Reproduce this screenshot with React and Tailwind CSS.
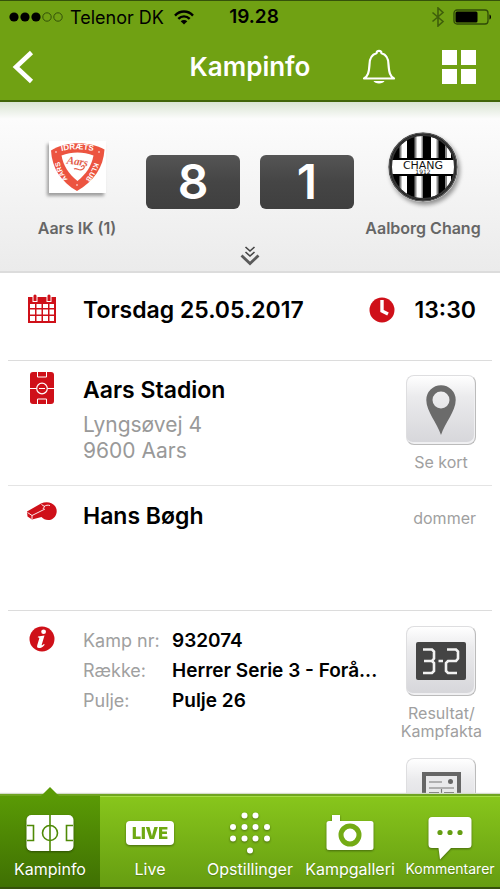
import React, { useState } from 'react';

function StatusBar() {
    return (
        <div className="grid grid-cols-[1fr_auto_1fr] items-center h-8 px-2 text-black">
            <div className="flex items-center whitespace-nowrap">
                <svg className="shrink-0" width="56" height="12" viewBox="0 0 56 12" aria-hidden="true">
                    <circle cx="6" cy="6" r="4.6" />
                    <circle cx="17" cy="6" r="4.6" />
                    <circle cx="28" cy="6" r="4.6" />
                    <circle cx="39" cy="6" r="4.2" fill="none" stroke="#33500a" />
                    <circle cx="50" cy="6" r="4.2" fill="none" stroke="#33500a" />
                </svg>
                <span className="ml-1.5 text-[18px]">Telenor DK</span>
                <svg className="ml-2.5 shrink-0" width="20" height="15" viewBox="0 0 20 15" fill="none" stroke="#000" strokeWidth="2.4" aria-hidden="true">
                    <path d="M1 5.6C6 .2 14 .2 19 5.6" />
                    <path d="M4.300 8.900c3.300-3.400 8.100-3.400 11.400 0" />
                    <path d="M10 14.500 6.700 11.300c1.900-1.700 4.700-1.700 6.600 0z" fill="#000" stroke="none" />
                </svg>
            </div>
            <span className="pl-2 text-[19px] font-semibold">19.28</span>
            <div className="flex items-center justify-end gap-2">
                <svg width="14" height="20" viewBox="0 0 14 20" fill="none" stroke="#3f5f0b" strokeWidth="1.600" aria-hidden="true">
                    <path d="M1.500 5.500 12 14.500 7 19V1l5 4.500-10.500 9" />
                </svg>
                <svg width="39" height="16" viewBox="0 0 39 16" aria-hidden="true">
                    <rect x="1" y="1" width="34" height="14" rx="3" fill="none" stroke="#2f4a08" strokeWidth="1.300" />
                    <rect x="2.500" y="2.500" width="22" height="11" rx="1.500" />
                    <path d="M36.500 5.500c2 .6 2 4.400 0 5z" />
                </svg>
            </div>
        </div>
    );
}

function Header() {
    return (
        <header className="shrink-0 bg-[#70a113] border-t border-t-[#35520a] border-b-2 border-b-[#416509]">
            <StatusBar />
            <div className="grid grid-cols-[1fr_auto_1fr] items-center h-[67px] px-3">
                <button aria-label="Tilbage" className="w-6">
                    <svg width="22" height="34" viewBox="0 0 22 34" fill="none" stroke="#fff" strokeWidth="4.600" aria-hidden="true">
                        <path d="M19.500 2.500 4 17l15.500 14.500" />
                    </svg>
                </button>
                <h1 className="text-[26px] font-semibold text-white">Kampinfo</h1>
                <div className="flex items-center justify-end gap-[46px] pr-3">
                    <button aria-label="Notifikationer">
                        <svg width="34" height="36" viewBox="0 0 34 36" fill="none" stroke="#fff" strokeWidth="2.200" aria-hidden="true">
                            <path d="M2 29.500c4-2.500 5-6 5.500-14C7.500 9 10 5.500 14.500 4.200c0-3.200 5-3.200 5 0C24 5.500 26.500 9 26.500 15.500c.5 8 1.500 11.500 5.500 14z" strokeLinejoin="round" />
                            <path d="M11.500 32h11c-1 3.300-10 3.300-11 0z" fill="#fff" stroke="none" />
                        </svg>
                    </button>
                    <button aria-label="Menu" className="grid grid-cols-2 gap-1">
                        <span className="w-[15px] h-[15px] bg-white" />
                        <span className="w-[15px] h-[15px] bg-white" />
                        <span className="w-[15px] h-[15px] bg-white" />
                        <span className="w-[15px] h-[15px] bg-white" />
                    </button>
                </div>
            </div>
        </header>
    );
}

function AarsLogo() {
    return (
        <svg width="57" height="52" viewBox="0 0 57 52" className="bg-white shadow-[-2px_3px_3px_rgba(0,0,0,0.35)]" role="img" aria-label="Aars IK">
            <path d="M2 9.500C17 0 40 0 55.500 8.500c-1 18-11 32-27.500 41.500C12 41 3 27 2 9.500z" fill="#ec5440" />
            <path d="M12.500 14.500c10-4 22-4 32 0C42.500 25 37.500 32.500 28.500 40 19.500 33 14.500 25 12.500 14.500z" fill="#fff" />
            <path id="aarsTop" d="M8 11Q28.500 5.500 49 11" fill="none" />
            <path id="aarsLeft" d="M24 44Q12 34 9 13" fill="none" />
            <path id="aarsRight" d="M47 14Q44 33 31 44" fill="none" />
            <g fill="#fff" fontFamily="Liberation Sans" fontWeight="bold" fontSize="7">
                <text fontSize="8"><textPath href="#aarsTop" startOffset="50%" textAnchor="middle">IDRÆTS</textPath></text>
                <text><textPath href="#aarsLeft" startOffset="50%" textAnchor="middle">AARS</textPath></text>
                <text><textPath href="#aarsRight" startOffset="50%" textAnchor="middle">KLUB</textPath></text>
            </g>
            <g fill="#fff">
                <circle cx="7" cy="11" r=".8" />
                <circle cx="50" cy="11" r=".8" />
                <circle cx="28" cy="44" r=".8" />
            </g>
            <text x="28" y="24" transform="rotate(8 28 24)" textAnchor="middle" fontFamily="Liberation Serif" fontStyle="italic" fontWeight="bold" fontSize="11" fill="#e2604c">Aars</text>
            <path d="M25 28c3-2 5 3 9 0 3-2 0-5-2-2" fill="none" stroke="#e2604c" strokeWidth="1.200" />
        </svg>
    );
}

function ChangLogo() {
    return (
        <svg width="70" height="70" viewBox="0 0 70 70" className="rounded-full shadow-[2px_3px_4px_rgba(0,0,0,0.4)]" role="img" aria-label="Aalborg Chang">
            <defs>
                <clipPath id="changClip"><circle cx="35" cy="35" r="31.500" /></clipPath>
            </defs>
            <circle cx="35" cy="35" r="34" fill="#111" stroke="#555" strokeWidth="1.500" />
            <g clipPath="url(#changClip)">
                <rect width="70" height="70" fill="#000" />
                <path d="M13 0h6v70h-6zM28 0h6v70h-6zM43 0h6v70h-6zM59 0h4v70h-4z" fill="#fff" />
                <path d="M11.500 0h2v70h-2zM26.500 0h2v70h-2zM33.500 0h1.500v70h-1.500zM48.500 0h2v70h-2zM57 0h2v70h-2z" fill="#888" />
                <rect y="26" width="70" height="18" fill="#000" />
            </g>
            <rect x="3.500" y="28" width="63" height="14" fill="#fff" />
            <text fill="#111" textAnchor="middle" fontFamily="DejaVu Sans">
                <tspan x="35" y="36.500" fontSize="11">CHANG</tspan>
                <tspan x="35" y="41.500" fontSize="6">1912</tspan>
            </text>
            <circle cx="35" cy="35" r="32" fill="none" stroke="#333" strokeWidth="2" />
        </svg>
    );
}

function Team({ name, children }) {
    return (
        <div className="flex flex-1 flex-col items-center">
            <div className="flex h-[74px] items-center">{children}</div>
            <span className="mt-3 text-[16px] leading-6 font-semibold text-[#666] whitespace-nowrap">{name}</span>
        </div>
    );
}

function ScoreBox({ value }) {
    return (
        <div className="flex h-[54px] w-[94px] items-center justify-center rounded-md bg-linear-to-b from-[#555] from-0% via-[#454545] via-50% to-[#3f3f3f] text-[48px] font-semibold text-white">
            {value}
        </div>
    );
}

function ScorePanel() {
    return (
        <section className="border-b-2 border-[#dcdcdc] bg-linear-to-b from-[#d9e4d2] from-0% via-[#fcfcfc] via-10% to-[#ebebeb] px-2 pt-7 pb-[5px]">
            <div className="flex items-start justify-between">
                <Team name="Aars IK (1)"><AarsLogo /></Team>
                <div className="flex gap-5 pt-[25px]">
                    <ScoreBox value="8" />
                    <ScoreBox value="1" />
                </div>
                <Team name="Aalborg Chang"><ChangLogo /></Team>
            </div>
            <button aria-label="Vis mere" className="mx-auto mt-1.5 block">
                <svg width="20" height="20" viewBox="0 0 20 20" fill="none" stroke="#444" aria-hidden="true">
                    <path d="m5.500 1 4.500 4 4.500-4M5.500 6l4.500 4 4.500-4" strokeWidth="1.600" />
                    <path d="m1.500 9.500 8.500 8 8.500-8" stroke="#5a5a5a" strokeWidth="2.800" />
                </svg>
            </button>
        </section>
    );
}

function Row({ icon, className, children }) {
    return (
        <section className={'mx-2 flex gap-2 ' + className}>
            <div className="flex w-[67px] shrink-0 justify-center">{icon}</div>
            {children}
        </section>
    );
}

function TileButton({ label, children }) {
    return (
        <button className="flex flex-col items-center gap-2 text-[16px] leading-[18px] text-[#a0a0a0]">
            <span className="flex h-[70px] w-[70px] items-center justify-center rounded-lg border border-[#dedee0] border-r-[#bbb] border-b-[#bbb] bg-linear-to-b from-white via-[#ebebed] via-30% to-[#d6d6da] shadow-[inset_-1px_-2px_0_#f0f0f2]">
                {children}
            </span>
            <span className="whitespace-pre-line">{label}</span>
        </button>
    );
}

function CalendarIcon() {
    return (
        <svg width="30" height="30" viewBox="0 0 30 30" aria-hidden="true">
            <path d="M1 3h28v26H1z" fill="#cf1019" />
            <path d="M5.500 0h5v8h-5zM19.500 0h5v8h-5z" fill="#fff" />
            <path d="M6.500 1.500q1.500-2 3 0V7h-3zM20.500 1.500q1.500-2 3 0V7h-3z" fill="#cf1019" />
            <path d="M3 10h5v4H3zM9.500 10h5v4h-5zM16 10h5v4h-5zM22.500 10h4.500v4h-4.500zM3 15.500h5v5H3zM9.500 15.500h5v5h-5zM16 15.500h5v5h-5zM22.500 15.500h4.500v5h-4.500zM3 22h5v5H3zM9.500 22h5v5h-5zM16 22h5v5h-5zM22.500 22h4.500v5h-4.500z" fill="#fff" />
        </svg>
    );
}

function ClockIcon() {
    return (
        <svg width="26" height="26" viewBox="0 0 26 26" aria-hidden="true">
            <circle cx="13" cy="13" r="12.500" fill="#cf1019" />
            <path d="M13 3v11l6 3" fill="none" stroke="#fff" strokeWidth="3.400" />
        </svg>
    );
}

function PitchIcon() {
    return (
        <svg width="24" height="32" viewBox="0 0 24 32" aria-hidden="true">
            <rect width="24" height="32" rx="3" fill="#cf1019" />
            <path d="M0 16.500h6.500M17.500 16.500H24M7.500 0v5h9V0M7.500 32v-5h9v5M9 16.500h6" fill="none" stroke="#fff" strokeWidth="1" />
            <circle cx="12" cy="16.500" r="5.300" fill="none" stroke="#fff" strokeWidth="1.200" />
        </svg>
    );
}

function WhistleIcon() {
    return (
        <svg width="32" height="20" viewBox="0 0 32 20" aria-hidden="true">
            <path d="M1 9.500 15 1.500c5-2.500 11-1.500 14 2.500 4 5.500.5 13-5.500 14-3.500.5-6-1-8-3L6 17.500 1.500 14.500z" fill="#cf1019" />
            <path d="M1.500 10.500 6 13.500l13-6.500M6 13.500v3.500M15.500 2.500l3 2-1.500 2.500M18 4.500c2-1.500 4-1.500 6-1" fill="none" stroke="#fff" strokeWidth=".9" />
        </svg>
    );
}

function InfoIcon() {
    return (
        <svg width="26" height="26" viewBox="0 0 26 26" aria-hidden="true">
            <circle cx="13" cy="13" r="12.500" fill="#cf1019" />
            <ellipse cx="14.600" cy="5.800" rx="2.400" ry="2.200" fill="#fff" />
            <path d="M9 10.500c2-.2 4.500-.8 6.500-1l-2.800 9.300c-.2.900.5.700 2.300-.8l.7.700c-2.300 2.700-4 3.300-5.700 3.300-2 0-2.200-1.300-1.700-3l1.900-6.200c.3-1-.1-1.300-1.400-1.300z" fill="#fff" />
        </svg>
    );
}

function PinIcon() {
    return (
        <svg width="30" height="50" viewBox="0 0 30 50" aria-hidden="true">
            <path fillRule="evenodd" d="M15 50C11 38 .3 26 .3 15a14.700 14.700 0 0 1 29.400 0C29.700 26 19 38 15 50zM15 6.500a8.500 8.500 0 1 0 0 17 8.500 8.500 0 0 0 0-17z" fill="#6b6b6b" />
        </svg>
    );
}

function ScoreboardIcon() {
    return (
        <svg width="50" height="38" viewBox="0 0 50 38" aria-hidden="true">
            <rect width="50" height="38" rx="2" fill="#444" />
            <path d="M7 7.500h9l2 2v7l-2 2.500H8M16 19l2 2v8l-2 2H7M31 7.500h9l2 2v7l-2 2.500h-8l-2 2V29l2 2h9M22.500 19h4.500" fill="none" stroke="#f2f2f2" strokeWidth="2.600" />
        </svg>
    );
}

function ReportIcon() {
    return (
        <svg width="39" height="42" viewBox="0 0 39 42" aria-hidden="true">
            <rect x="2" y="2" width="35" height="38" fill="#e9e9eb" stroke="#666" strokeWidth="4" />
            <path d="M7 10h13M7 16h25M19.500 17v19" stroke="#777" strokeWidth="1.200" />
            <path d="M7 21h10M22 21h10M7 25h10M22 25h10M7 29h10M22 29h10" stroke="#777" strokeWidth="2" />
            <circle cx="28.500" cy="9.500" r="2.500" fill="#666" />
        </svg>
    );
}

const matchFacts = [
    { label: 'Kamp nr:', value: '932074' },
    { label: 'Række:', value: 'Herrer Serie 3 - Forå...' },
    { label: 'Pulje:', value: 'Pulje 26' },
];

function MatchDetails() {
    return (
        <>
            <Row icon={<CalendarIcon />} className="h-[88px] border-b border-[#dcdcdc] pt-[21px] pr-4">
                <span className="flex-1 text-[23px] leading-8 font-semibold">Torsdag 25.05.2017</span>
                <span className="flex h-8 items-center gap-5 text-[23px] leading-8 font-semibold">
                    <ClockIcon />13:30
                </span>
            </Row>
            <Row icon={<PitchIcon />} className="min-h-[125px] border-b border-[#e4e4e4] pt-[11px] pr-4">
                <div className="flex-1 pt-1">
                    <h2 className="text-[23px] leading-7 font-semibold">Aars Stadion</h2>
                    <address className="mt-2 text-[21px] leading-[26px] text-[#999] not-italic">
                        Lyngsøvej 4<br />9600 Aars
                    </address>
                </div>
                <div className="pt-[3px]">
                    <TileButton label="Se kort"><PinIcon /></TileButton>
                </div>
            </Row>
            <Row icon={<WhistleIcon />} className="h-[125px] border-b border-[#dcdcdc] pt-4 pr-4">
                <h2 className="flex-1 text-[23px] leading-7 font-semibold">Hans Bøgh</h2>
                <span className="text-[16px] leading-8 text-[#a0a0a0]">dommer</span>
            </Row>
            <Row icon={<InfoIcon />} className="pt-[15px] pr-[10px] pb-4">
                <dl className="min-w-0 flex-1 text-[19px] leading-[30px]">
                    {matchFacts.map((fact) => (
                        <div key={fact.label} className="flex">
                            <dt className="w-[89px] shrink-0 text-[18px] text-[#a0a0a0]">{fact.label}</dt>
                            <dd className="truncate font-semibold">{fact.value}</dd>
                        </div>
                    ))}
                </dl>
                <div className="flex shrink-0 flex-col items-center gap-[18px]">
                    <TileButton label={'Resultat/\nKampfakta'}><ScoreboardIcon /></TileButton>
                    <TileButton label=""><ReportIcon /></TileButton>
                </div>
            </Row>
        </>
    );
}

function KampinfoIcon() {
    return (
        <svg width="48" height="36" viewBox="0 0 48 36" aria-hidden="true">
            <rect x=".5" width="47" height="36" rx="5" fill="#fff" />
            <path d="M24 0v36M1 10.500h6.500v15H1M47 10.500h-6.500v15H47" fill="none" stroke="#4f8a06" strokeWidth="1.600" />
            <circle cx="24" cy="18" r="7.500" fill="none" stroke="#4f8a06" strokeWidth="1.600" />
        </svg>
    );
}

function LiveIcon() {
    return (
        <span className="flex h-6 w-12 items-center justify-center rounded-sm bg-white text-[16px] font-black text-[#6fa912]" aria-hidden="true">LIVE</span>
    );
}

function LineupIcon() {
    return (
        <svg width="42" height="42" viewBox="0 0 42 42" fill="#fff" aria-hidden="true">
            <circle cx="15.500" cy="3.500" r="3" />
            <circle cx="26.500" cy="3.500" r="3" />
            <circle cx="4" cy="15" r="3" />
            <circle cx="15.500" cy="15" r="3" />
            <circle cx="26.500" cy="15" r="3" />
            <circle cx="38" cy="15" r="3" />
            <circle cx="4" cy="26.500" r="3" />
            <circle cx="15.500" cy="26.500" r="3" />
            <circle cx="26.500" cy="26.500" r="3" />
            <circle cx="38" cy="26.500" r="3" />
            <circle cx="21" cy="38.500" r="3" />
        </svg>
    );
}

function CameraIcon() {
    return (
        <svg width="48" height="36" viewBox="0 0 48 36" aria-hidden="true">
            <path d="M6 0h8v6h31q2.500 0 2.500 2.500v24q0 2.500-2.500 2.500H3Q.5 35 .5 32.500v-24Q.5 6 3 6h3z" fill="#fff" />
            <circle cx="24" cy="20" r="9" fill="#fff" stroke="#74ab15" strokeWidth="5" />
        </svg>
    );
}

function CommentIcon() {
    return (
        <svg className="shrink-0" width="44" height="56" viewBox="0 -12 44 56" aria-hidden="true">
            <path d="M4 0h36q3.500 0 3.500 3.500v24q0 3.500-3.500 3.500H23L12 42.500 10.500 31H4Q.5 31 .5 27.500v-24Q.5 0 4 0z" fill="#fff" />
            <g fill="#659d12">
                <circle cx="12" cy="15.500" r="2.600" />
                <circle cx="22" cy="15.500" r="2.600" />
                <circle cx="32" cy="15.500" r="2.600" />
            </g>
        </svg>
    );
}

const tabs = [
    { name: 'Kampinfo', Icon: KampinfoIcon, size: 'text-[16px]' },
    { name: 'Live', Icon: LiveIcon, size: 'text-[16px]' },
    { name: 'Opstillinger', Icon: LineupIcon, size: 'text-[16px]' },
    { name: 'Kampgalleri', Icon: CameraIcon, size: 'text-[16px]' },
    { name: 'Kommentarer', Icon: CommentIcon, size: 'text-[14px]' },
];

function TabBar() {
    const [active, setActive] = useState('Kampinfo');

    return (
        <nav className="grid shrink-0 grid-cols-5 border-t-2 border-b-2 border-t-[#6fa421] border-b-[#35520a] bg-linear-to-b from-[#88c61c] to-[#669d11] shadow-[0_-1px_1px_#d5dccb,inset_0_1px_0_#a5dc45]">
            {tabs.map(({ name, Icon, size }) => (
                <button
                    key={name}
                    onClick={() => setActive(name)}
                    className={'relative flex h-[91px] flex-col items-center text-white ' + (active === name ? 'bg-linear-to-b from-[#5a9a05] to-[#3f7003]' : '')}>
                    {active === name && (
                        <svg width="18" height="10" viewBox="0 0 18 10" className="absolute -top-[10px] left-1/2 -translate-x-1/2" aria-hidden="true">
                            <path d="m0 10 9-9 9 9z" fill="#5a9a05" />
                        </svg>
                    )}
                    <span className="flex h-[61px] items-center pt-3 drop-shadow-[0_1px_1px_rgba(0,0,0,0.4)]"><Icon /></span>
                    <span className={'leading-6 text-shadow-xs ' + size}>{name}</span>
                </button>
            ))}
        </nav>
    );
}

function App() {
    return (
        <div className="flex h-screen flex-col bg-white font-[Inter,sans-serif] text-black">
            <Header />
            <main className="min-h-0 flex-1 overflow-y-auto [scrollbar-width:none]">
                <ScorePanel />
                <MatchDetails />
            </main>
            <TabBar />
        </div>
    );
}

export default App;
